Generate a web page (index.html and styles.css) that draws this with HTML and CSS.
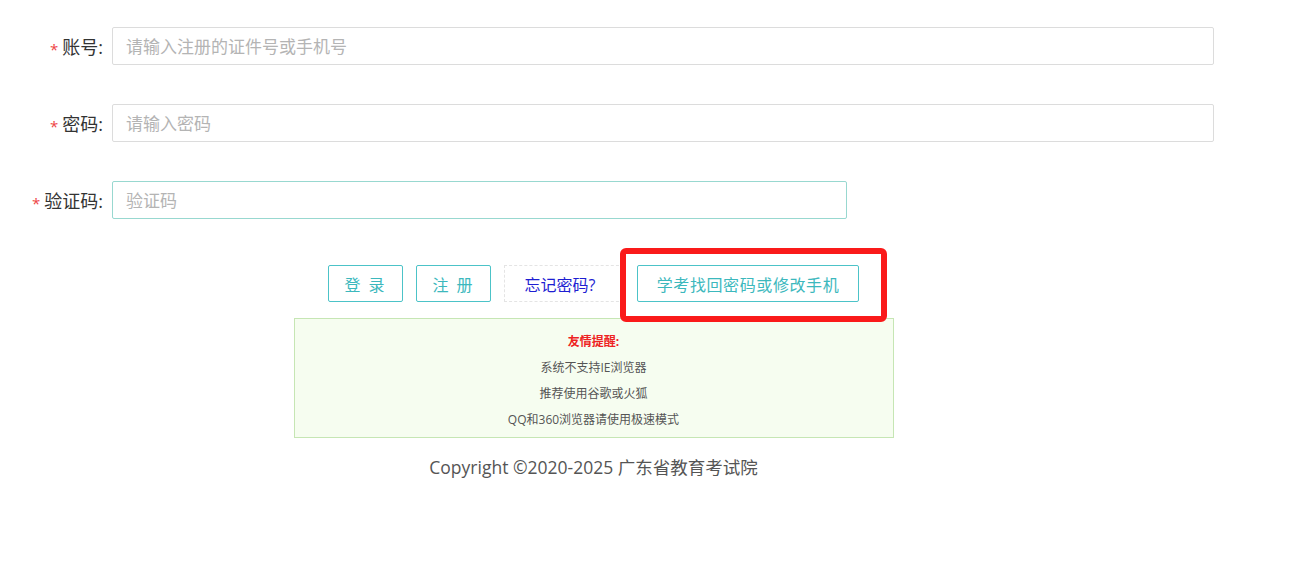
FILE: index.html
```html
<!DOCTYPE html>
<html lang="zh-CN">
<head>
<meta charset="utf-8">
<link rel="stylesheet" href="styles.css">
</head>
<body>
<div class="page">
  <form class="form">
    <div class="row">
      <label class="label"><span class="req">*</span>账号:</label>
      <input class="input" type="text" placeholder="请输入注册的证件号或手机号">
    </div>
    <div class="row">
      <label class="label"><span class="req">*</span>密码:</label>
      <input class="input" type="password" placeholder="请输入密码">
    </div>
    <div class="row">
      <label class="label"><span class="req">*</span>验证码:</label>
      <input class="input input-code" type="text" placeholder="验证码">
    </div>
  </form>
  <div class="lower">
    <div class="actions">
      <button class="btn" type="button">登 录</button>
      <button class="btn" type="button">注 册</button>
      <a class="forgot">忘记密码?</a>
      <button class="btn btn-wide" type="button">学考找回密码或修改手机</button>
      <div class="highlight"></div>
    </div>
    <div class="notice">
      <p class="notice-title">友情提醒:</p>
      <p>系统不支持IE浏览器</p>
      <p>推荐使用谷歌或火狐</p>
      <p>QQ和360浏览器请使用极速模式</p>
    </div>
    <p class="copyright">Copyright ©2020-2025 广东省教育考试院</p>
  </div>
</div>
</body>
</html>
```
FILE: styles.css
```css
* { box-sizing: border-box; }
html, body { margin: 0; background: #fff; }
body {
  font-family: "Open Sans", "Noto Sans CJK SC", sans-serif;
  color: #333;
}
.page { width: 1291px; padding-top: 27px; }
.form { display: flex; flex-direction: column; gap: 39px; }
.row { display: flex; align-items: center; height: 38px; }
.label {
  width: 104px;
  padding-right: 1px;
  text-align: right;
  font-size: 18px;
  color: #333;
  margin-right: 8px;
}
.req { color: #ee4444; font-size: 15px; margin-right: 4px; position: relative; top: 1px; }
.input {
  width: 1102px;
  height: 38px;
  border: 1px solid #dcdcdc;
  border-radius: 2px;
  padding: 0 13px;
  font-size: 17px;
  font-family: inherit;
  color: #333;
  outline: none;
}
.input::placeholder { color: #b4b4b4; }
.input-code { width: 735px; border-color: #98d8d0; }
.lower { width: 1187px; display: flex; flex-direction: column; align-items: center; padding-top: 46px; }
.actions { position: relative; display: flex; gap: 13px; height: 37px; }
.btn {
  height: 37px;
  width: 75px;
  border: 1px solid #4cc3c8;
  border-radius: 2px;
  background: #fff;
  color: #3cb8bd;
  font-size: 16px;
  font-family: inherit;
  letter-spacing: 2px;
  padding: 0;
}
.btn-wide { width: 222px; letter-spacing: 0.6px; }
.forgot {
  width: 120px;
  height: 37px;
  display: flex;
  align-items: center;
  justify-content: center;
  border: 1px dashed #e4e4e4;
  color: #1e1ed2;
  font-size: 16px;
  padding-right: 8px;
}
.highlight {
  position: absolute;
  left: 292px;
  top: -17px;
  width: 267px;
  height: 74px;
  border: 6px solid #fa1a1a;
  border-radius: 6px;
  z-index: 2;
}
.notice {
  margin-top: 16px;
  width: 600px;
  height: 120px;
  border: 1px solid #c6e6b4;
  background: #f6fdf0;
  text-align: center;
  font-size: 12px;
  color: #555;
  padding-top: 10px;
}
.notice p { margin: 0; line-height: 26px; height: 26px; }
.notice-title { color: #ee2222; font-weight: bold; }
.copyright {
  margin: 17px 0 0;
  font-size: 17.5px;
  color: #555;
  line-height: 24px;
}
```
